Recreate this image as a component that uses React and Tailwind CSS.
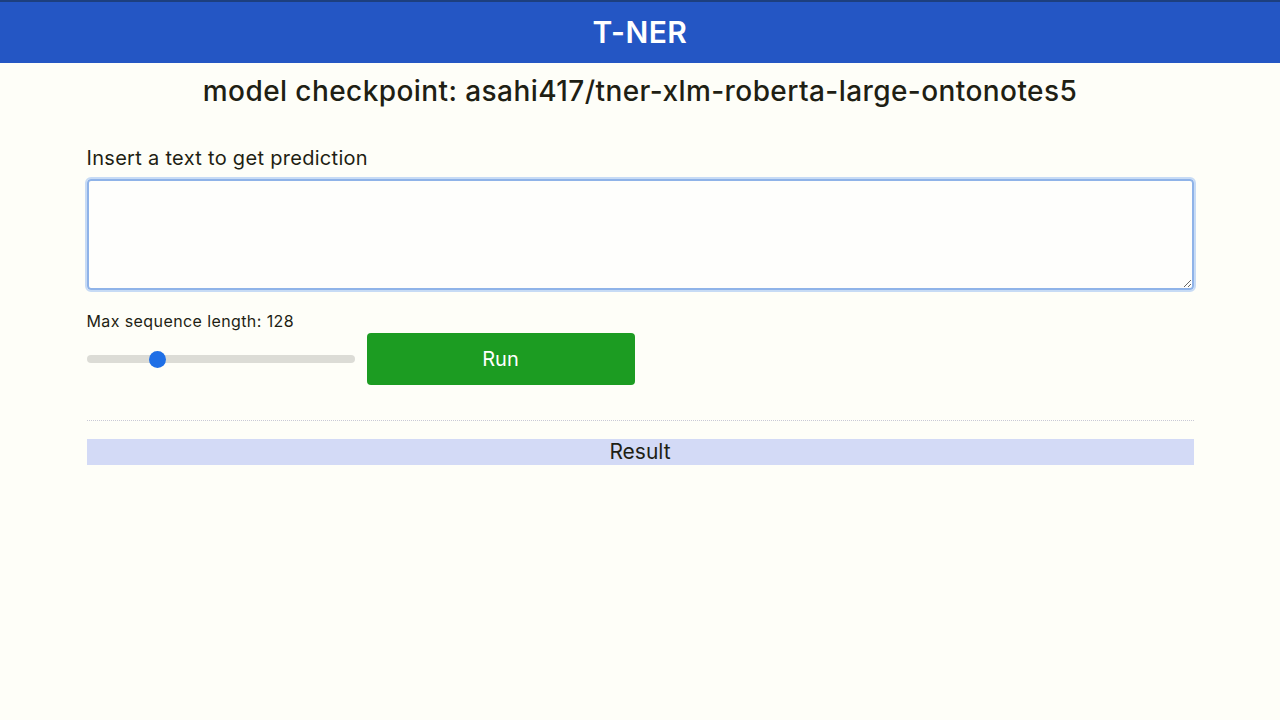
import { useState } from 'react';

const App = () => {
  const [text, setText] = useState('');
  const [maxLen] = useState(128);
  const frac = maxLen / 512;

  return (
    <div className="min-h-[720px] bg-[#fefef8] text-[#1f1f14]" style={{ fontFamily: 'Inter, "Liberation Sans", sans-serif' }}>
      <header className="h-[63px] bg-[#2456c4] border-t-2 border-[#1d3f7e] flex items-center justify-center">
        <h1 className="text-[30px] font-semibold text-white tracking-[0.015em]">T-NER</h1>
      </header>
      <div className="w-[1107px] mx-auto">
        <h2 className="text-center text-[28px] font-medium mt-[11px] leading-[34px] tracking-[0.015em]">
          model checkpoint: asahi417/tner-xlm-roberta-large-ontonotes5
        </h2>
        <label className="block text-[20px] mt-[37px] leading-[26px] tracking-[0.015em]">Insert a text to get prediction</label>
        <textarea
          value={text}
          onChange={(e) => setText(e.target.value)}
          className="block w-full h-[111px] mt-[8px] rounded-[4px] border-2 border-[#8fb3e8] outline outline-2 outline-[#c7dbf5] bg-[#fefefc] px-3 py-2 text-[16px] resize-y"
        />
        <div className="text-[16px] mt-[21px] leading-[20px] tracking-[0.025em]">Max sequence length: {maxLen}</div>
        <div className="flex items-center mt-[2px]">
          <div className="relative w-[268px] h-[52px] flex items-center">
            <div className="w-full h-[8px] rounded-full bg-[#dcdcd6]" />
            <div
              className="absolute w-[17px] h-[17px] rounded-full bg-[#1f6fe6]"
              style={{ left: `calc(${frac} * (100% - 17px))` }}
            />
          </div>
          <button className="ml-[12px] w-[268px] h-[52px] rounded-[4px] bg-[#1c9c22] text-white text-[20px]">
            Run
          </button>
        </div>
        <hr className="mt-[35px] border-0 border-t border-dotted border-[#c9c9d6]" />
        <div className="mt-[18px] h-[26px] bg-[#d3daf6] text-center text-[21px] leading-[26px]">Result</div>
      </div>
    </div>
  );
};

export default App;
